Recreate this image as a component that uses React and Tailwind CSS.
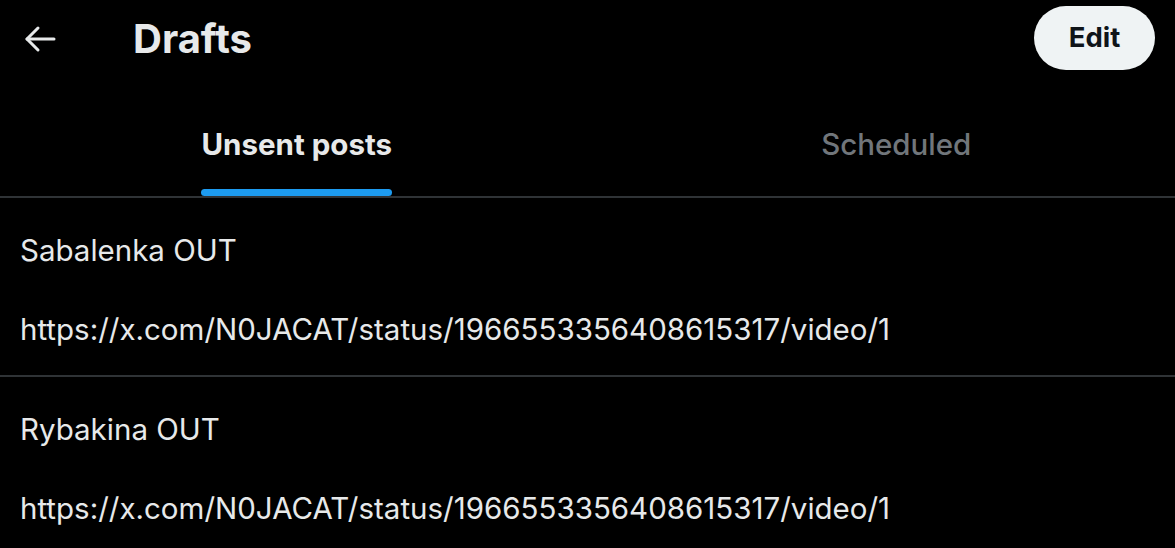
// Drafts screen — unsent posts tab
const drafts = [
  { id: 1, title: 'Sabalenka OUT', link: 'https://x.com/N0JACAT/status/1966553356408615317/video/1' },
  { id: 2, title: 'Rybakina OUT', link: 'https://x.com/N0JACAT/status/1966553356408615317/video/1' },
];

function BackArrow() {
  return (
    <svg width="32" height="28" viewBox="0 0 32 28" fill="none" stroke="#e7e9ea" strokeWidth="3" strokeLinecap="round" strokeLinejoin="round">
      <path d="M3 14h27" />
      <path d="M14 3L3 14l11 11" />
    </svg>
  );
}

export default function App() {
  return (
    <div className="w-[1175px] h-[548px] overflow-hidden bg-black text-[#e7e9ea]" style={{ fontFamily: 'Inter, Roboto, "Noto Sans", sans-serif' }}>
      {/* Header */}
      <header className="h-[78px] flex items-center pl-[24px] pr-[20px]">
        <button className="w-[32px] h-[28px] flex items-center justify-center">
          <BackArrow />
        </button>
        <h1 className="ml-[77px] text-[40px] font-bold leading-none">Drafts</h1>
        <button className="ml-auto h-[64px] w-[121px] rounded-full bg-[#eff3f4] text-[#0f1419] text-[27.5px] font-bold mb-[2px]">
          Edit
        </button>
      </header>

      {/* Tabs */}
      <nav className="flex border-b-2 border-[#2f3336]">
        <div className="flex-1 flex justify-center pl-[18px]">
          <div className="flex flex-col items-center pt-[47px]">
            <span className="text-[29.5px] font-bold leading-[38px]">Unsent posts</span>
            <span className="mt-[26px] h-[7px] w-full rounded-full bg-[#1d9bf0]" />
          </div>
        </div>
        <div className="flex-1 flex justify-center pl-[42px]">
          <div className="pt-[47px]">
            <span className="text-[29.5px] font-medium leading-[38px] text-[#71767b]">Scheduled</span>
          </div>
        </div>
      </nav>

      {/* Draft list */}
      <ul>
        {drafts.map((d) => (
          <li key={d.id} className="border-b-2 border-[#2f3336] px-[20px] pt-[33px] pb-[25px] text-[29.5px] leading-[39.5px]">
            <p>{d.title}</p>
            <p>&nbsp;</p>
            <p>{d.link}</p>
          </li>
        ))}
      </ul>
    </div>
  );
}
